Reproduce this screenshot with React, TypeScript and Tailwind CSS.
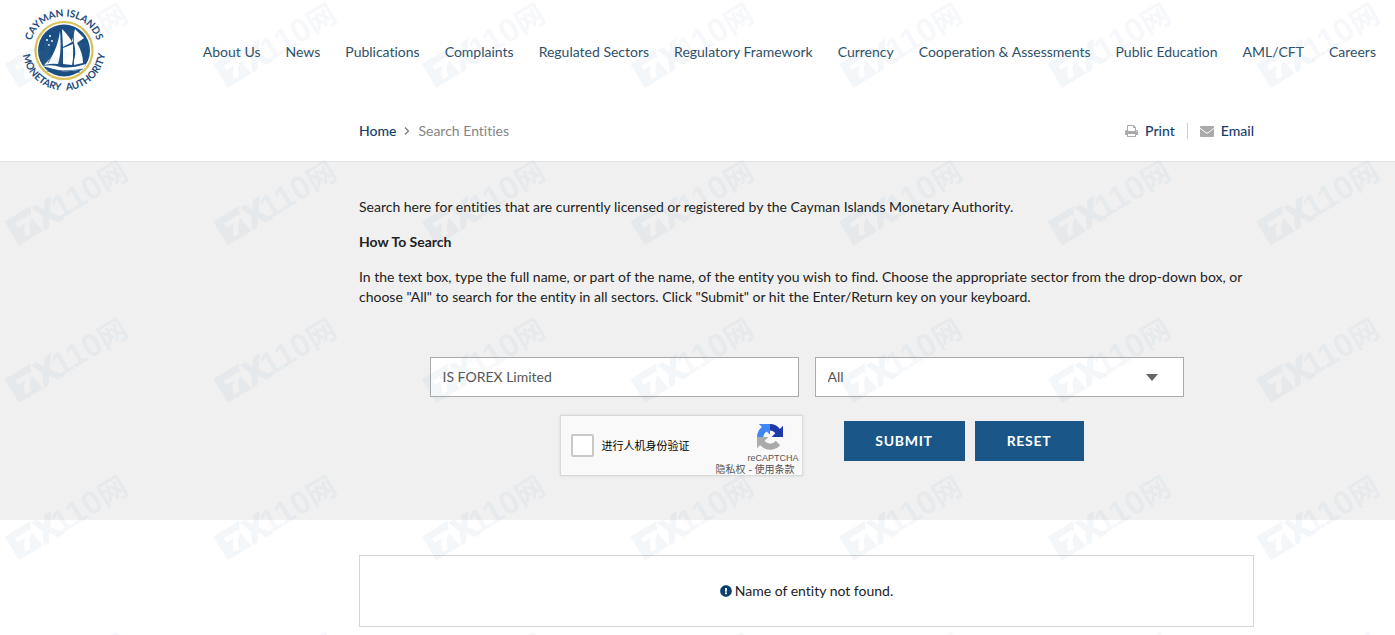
import { useState } from 'react'
import type { FormEvent } from 'react'
import { FaExclamationCircle } from 'react-icons/fa'

const NAV_ITEMS = [
  'About Us',
  'News',
  'Publications',
  'Complaints',
  'Regulated Sectors',
  'Regulatory Framework',
  'Currency',
  'Cooperation & Assessments',
  'Public Education',
  'AML/CFT',
  'Careers',
]

const SECTORS = ['All', 'Banking', 'Insurance', 'Investment Funds', 'Securities', 'Trust']

// ── Logo ──────────────────────────────────────────────────────────────────────

function Logo() {
  return (
    <svg viewBox="0 0 84 84" className="size-[84px] overflow-visible" role="img" aria-label="Cayman Islands Monetary Authority">
      <defs>
        <path id="seal-top" d="M7.500 42a34.500 34.500 0 0 1 69 0" />
        <path id="seal-bottom" d="M.5 40a41.500 41.500 0 0 0 83 0" />
      </defs>
      <circle cx="42" cy="41.500" r="28.500" fill="#fff" stroke="#d9c057" strokeWidth="2.200" />
      <circle cx="42" cy="41.500" r="26" fill="#1b4f83" />
      {/* stars */}
      <g fill="#fff">
        <circle cx="28" cy="27" r="1" />
        <circle cx="25" cy="31" r="1" />
        <circle cx="30" cy="32" r=".9" />
        <circle cx="27" cy="36" r=".9" />
      </g>
      {/* sails */}
      <g fill="#fff">
        <path d="M38 22C36 37 31 48 22 56q8-2 14-1C39 46 39 35 38 22Z" />
        <path d="M40 20c5 5 8 9 10 13l-9 5Z" />
        <path d="M41 39l10-4q1 12-1 21l-9-1Z" />
        <path d="M53 20q5 5 9 9l-7 5q6 10 6 20l-9 2-1-2q4-9 1-20l-2-2Z" />
        <path d="M20 57q11-2 18 1 10 2 26-3l-3 5q-11 3-22 2-11-3-19-5Z" />
      </g>
      <path d="M39.500 19v39M51.500 19v38M33 37q-2 9-7 17" fill="none" stroke="#1b4f83" strokeWidth=".8" />
      <path d="M23 59q16 5 38 1M25 62q15 4 33 1" fill="none" stroke="#1b4f83" strokeWidth=".7" />
      <g fill="#1e4a78" className="font-['Lato',sans-serif] font-bold" textAnchor="middle" fontSize="10">
        <text>
          <textPath href="#seal-top" startOffset="50%">CAYMAN ISLANDS</textPath>
        </text>
        <text>
          <textPath href="#seal-bottom" startOffset="26%">MONETARY</textPath>
        </text>
        <text>
          <textPath href="#seal-bottom" startOffset="74%">AUTHORITY</textPath>
        </text>
      </g>
    </svg>
  )
}

// ── Small icons ───────────────────────────────────────────────────────────────

function PrintIcon() {
  return (
    <svg viewBox="0 128 1664 1536" className="h-3 w-[13px] fill-[#aaa]" aria-hidden="true">
      <path d="M384 1536h896v-256h-896v256zM384 896h896v-384h-160q-40 0-68-28t-28-68v-160h-640v640zM1536 960q0-26-19-45t-45-19-45 19-19 45 19 45 45 19 45-19 19-45zM1664 960v416q0 13-9.5 22.5t-22.5 9.5h-224v160q0 40-28 68t-68 28h-960q-40 0-68-28t-28-68v-160h-224q-13 0-22.5-9.5t-9.5-22.5v-416q0-79 56.5-135.5t135.5-56.5h64v-544q0-40 28-68t68-28h672q40 0 88 20t76 48l152 152q28 28 48 76t20 88v256h64q79 0 135.5 56.5t56.5 135.5z" />
    </svg>
  )
}

function EnvelopeIcon() {
  return (
    <svg viewBox="0 0 14 11" className="h-[11px] w-3.5" aria-hidden="true">
      <rect width="14" height="11" rx="1" fill="#aaa" />
      <path d="M0 2.200 6 6.800q1 .7 2 0L14 2.200" fill="none" stroke="#fff" strokeWidth="1" />
    </svg>
  )
}

function RecaptchaIcon() {
  return (
    <svg viewBox="0 0 64 64" className="size-[26px]" aria-hidden="true">
      <path fill="#1c3aa9" d="M64 32V4.500l-7.600 7.600A32 32 0 0 0 32 0v16c5.500 0 10.200 2.600 13 7l-9 9Z" />
      <path fill="#4285f4" d="M32 0H4.500l7.600 7.600A32 32 0 0 0 0 32h16c0-6 3-11 8-13.500l8 8Z" />
      <path fill="#ababab" d="M0 32v27.500l7.600-7.600A32 32 0 0 0 57 52L46 41a16 16 0 0 1-27 0l9-9Z" />
    </svg>
  )
}

// ── Watermark ─────────────────────────────────────────────────────────────────

const MARK_COLUMNS = [0, 1, 2, 3, 4, 5, 6]
const MARK_ROWS = [0, 1, 2, 3, 4]

function Watermark() {
  return (
    <svg className="pointer-events-none absolute inset-0 size-full" aria-hidden="true">
      <defs>
        <g id="mark" transform="rotate(-31)">
          <path fillRule="evenodd" d="M-62-14h30l-5 10 3 18h-28ZM-54-7v5h9q-6 5-7 12h6q2-9 9-13v-4Z" />
          <path d="M-32-12h6l4 8 5-8h8l-9 13 9 13h-8l-5-8-5 8h-6l6-13Z" />
          <text
            x="-14"
            y="13"
            fontSize="33"
            className="font-['Liberation_Sans','Noto_Sans_CJK_SC',sans-serif] font-bold"
          >
            110
            <tspan fontSize="29">网</tspan>
          </text>
        </g>
      </defs>
      <g fill="#6f9abf" fillOpacity=".08">
        {MARK_ROWS.map(row =>
          MARK_COLUMNS.map(col => (
            <use key={`${row}-${col}`} href="#mark" x={65 + col * 208.6} y={44 + row * 157.5} />
          )),
        )}
      </g>
    </svg>
  )
}

// ── Captcha box ───────────────────────────────────────────────────────────────

function Captcha() {
  return (
    <div className="flex h-[61px] w-[243px] items-center border border-[#d9d9d9] bg-[#f9f9f9] pl-2.5 font-['Liberation_Sans','Noto_Sans_CJK_SC',sans-serif] shadow-[0_0_3px_rgba(0,0,0,0.1)]">
      <input
        id="captcha"
        type="checkbox"
        className="size-[23px] appearance-none rounded-xs border-2 border-[#c8c8c8] bg-white"
      />
      <label htmlFor="captcha" className="ml-2 text-[11px] leading-5 text-black">
        进行人机身份验证
      </label>
      <div className="ml-auto flex flex-col items-end pt-2 pr-[3px] text-[#555]">
        <div className="mr-4">
          <RecaptchaIcon />
        </div>
        <span className="mt-0.5 text-[9px] leading-3">reCAPTCHA</span>
        <p className="mr-1 text-[10px] leading-3">
          <a href="#privacy">隐私权</a> - <a href="#terms">使用条款</a>
        </p>
      </div>
    </div>
  )
}

// ── Page ──────────────────────────────────────────────────────────────────────

export default function App() {
  const [name, setName] = useState('IS FOREX Limited')
  const [sector, setSector] = useState('All')

  const handleSubmit = (e: FormEvent) => e.preventDefault()

  return (
    <div className="relative min-h-screen overflow-hidden bg-white font-['Lato',sans-serif] text-sm leading-5 text-[#222] [font-variant-ligatures:none]">
      <header className="flex h-[101px] items-center justify-between pr-[19px] pl-[22px]">
        <a href="#home">
          <Logo />
        </a>
        <nav className="flex gap-[25px] pt-0.5 whitespace-nowrap text-[#2f5069]">
          {NAV_ITEMS.map(item => (
            <a key={item} href="#nav">{item}</a>
          ))}
        </nav>
      </header>

      <div className="border-b border-[#e2e2e2]">
        <div className="mx-auto flex max-w-[1113px] items-center justify-between pt-5 pb-5 pl-[218px]">
          <div className="flex items-center">
            <a href="#home" className="font-medium text-[#14406b]">Home</a>
            <svg viewBox="0 0 6 8" className="mx-2 h-2 w-1.5" aria-hidden="true">
              <path d="m1 .5 3.500 3.500L1 7.500" fill="none" stroke="#777" strokeWidth="1.200" />
            </svg>
            <span className="text-[#858585]">Search Entities</span>
          </div>
          <div className="flex items-center font-medium text-[#14406b]">
            <a href="#print" className="flex items-center gap-[7px]">
              <PrintIcon /> Print
            </a>
            <span className="mx-3 h-4 w-px bg-[#ccc]" />
            <a href="#email" className="flex items-center gap-[7px]">
              <EnvelopeIcon /> Email
            </a>
          </div>
        </div>
      </div>

      <section className="bg-[#f0f0f0] pt-[35px] pb-11">
        <div className="mx-auto max-w-[1113px] pl-[218px]">
          <div className="space-y-[15px]">
            <p>Search here for entities that are currently licensed or registered by the Cayman Islands Monetary Authority.</p>
            <h2 className="font-bold">How To Search</h2>
            <p>
              In the text box, type the full name, or part of the name, of the entity you wish to find. Choose the
              appropriate sector from the drop-down box, or choose "All" to search for the entity in all sectors. Click
              "Submit" or hit the Enter/Return key on your keyboard.
            </p>
          </div>

          <form onSubmit={handleSubmit} className="pt-[50px]">
            <div className="mx-auto grid max-w-[754px] grid-cols-2 gap-4">
              <input
                aria-label="Entity name"
                value={name}
                onChange={e => setName(e.target.value)}
                className="h-10 border border-[#aaa] bg-white px-3 pb-0.5 text-[#555] outline-none"
              />
              <div className="relative">
                <select
                  aria-label="Sector"
                  value={sector}
                  onChange={e => setSector(e.target.value)}
                  className="h-10 w-full appearance-none border border-[#aaa] bg-white px-3 text-[#555] outline-none"
                >
                  {SECTORS.map(s => (
                    <option key={s}>{s}</option>
                  ))}
                </select>
                <svg
                  viewBox="0 0 12 7"
                  className="pointer-events-none absolute top-[17px] right-[26px] h-[7px] w-3 fill-[#666]"
                  aria-hidden="true"
                >
                  <path d="M0 0h12L6 7Z" />
                </svg>
              </div>
            </div>
            <div className="flex items-start justify-center pt-[18px] pl-[30px]">
              <Captcha />
              <div className="ml-[41px] flex gap-2.5 pt-1.5 font-bold tracking-wider text-white">
                <button type="submit" className="h-10 w-[121px] bg-[#1a5688]">SUBMIT</button>
                <button type="reset" onClick={() => setName('')} className="h-10 w-[109px] bg-[#1a5688]">
                  RESET
                </button>
              </div>
            </div>
          </form>
        </div>
      </section>

      <section className="mx-auto max-w-[1113px] pt-[35px] pb-2 pl-[218px]">
        <div className="flex items-center justify-center gap-[3px] border border-[#d5d5d5] py-[25px]">
          <FaExclamationCircle className="size-3 text-[#0d3f6f]" />
          <p>Name of entity not found.</p>
        </div>
      </section>

      <Watermark />
    </div>
  )
}
